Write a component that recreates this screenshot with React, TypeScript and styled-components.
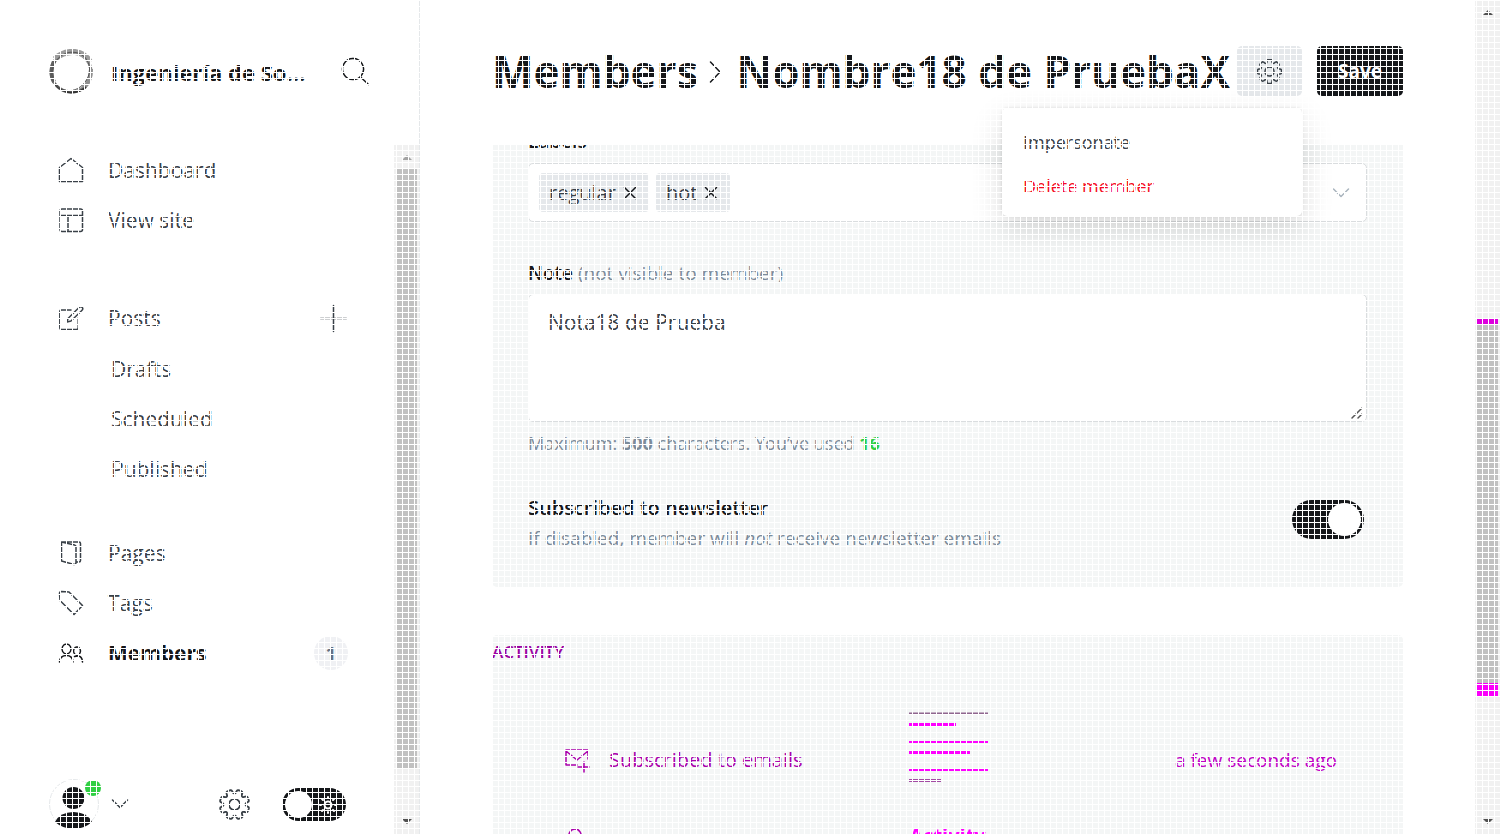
import React from "react";
import styled, { createGlobalStyle } from "styled-components";

const ink = "#15171a";
const slate = "#394047";

const GlobalStyle = createGlobalStyle`
  *, *::before, *::after { box-sizing: border-box; }
  body {
    margin: 0;
    background: #fff;
    color: ${slate};
    font-family: "Open Sans", "Noto Sans", sans-serif;
    font-size: 20px;
    line-height: 30px;
    overflow: hidden;
  }
  button, input, textarea { font: inherit; color: inherit; }
  button { border: 0; padding: 0; background: none; cursor: pointer; }
  svg { display: block; flex: none; }
  h1, h2, h3, p { margin: 0; font-weight: 400; }
`;

/* fine white mesh laid over the whole page */
const Mesh = styled.div`
  position: fixed;
  inset: 0;
  z-index: 10;
  pointer-events: none;
  background-image: linear-gradient(to right, #fff 1px, transparent 1px),
    linear-gradient(to bottom, #fff 1px, transparent 1px);
  background-size: 6px 6px;
`;

const Page = styled.div`
  display: grid;
  grid-template-columns: 420px minmax(0, 1fr) 25px;
  height: 100vh;
`;

const Sidebar = styled.aside`
  display: flex;
  flex-direction: column;
  min-height: 0;
  border-right: 1px solid #e5e8ea;
`;

const SiteHeader = styled.header`
  display: flex;
  align-items: center;
  flex: none;
  height: 145px;
  padding: 0 49px 2px;
`;

const SiteName = styled.div`
  flex: 1;
  margin-left: 17px;
  font-size: 22px;
  font-weight: 700;
  color: ${ink};
  white-space: nowrap;
`;

const SidebarBody = styled.div`
  display: flex;
  flex: 1;
  min-height: 0;
`;

const NavColumn = styled.div`
  display: flex;
  flex: 1;
  flex-direction: column;
  justify-content: space-between;
  padding: 0 46px 0 58px;
`;

const NavGroup = styled.nav<{ $gap?: number }>`
  margin-bottom: ${(p) => p.$gap ?? 0}px;
`;

const SubNav = styled.div`
  padding-top: 1px;
`;

const NavRow = styled.div`
  display: flex;
  align-items: center;
  justify-content: space-between;
  height: 50px;
`;

const NavLink = styled.a<{ $active?: boolean; $sub?: boolean }>`
  display: flex;
  align-items: center;
  gap: 24px;
  padding-left: ${(p) => (p.$sub ? 53 : 0)}px;
  font-size: 21px;
  font-weight: ${(p) => (p.$active ? 700 : 400)};
  color: ${(p) => (p.$active ? ink : slate)};
  text-decoration: none;
`;

const Count = styled.span`
  width: 34px;
  height: 34px;
  border-radius: 50%;
  background: #f0f1f4;
  color: #667080;
  font-size: 18px;
  font-weight: 700;
  line-height: 34px;
  text-align: center;
`;

const UserBar = styled.footer`
  display: flex;
  align-items: center;
  height: 50px;
  margin: 0 2px 5px -9px;
`;

const Account = styled.button`
  display: flex;
  align-items: center;
  gap: 12px;
  margin-right: auto;
`;

const Avatar = styled.span`
  position: relative;
  width: 50px;
  height: 50px;
`;

const Online = styled.span`
  position: absolute;
  top: 1px;
  right: -2px;
  width: 16px;
  height: 16px;
  border-radius: 50%;
  background: #30cf43;
`;

const NightToggle = styled.label`
  position: relative;
  display: block;
  margin-left: 32px;
`;

const Switch = styled.input<{ $w: number; $h: number; $knob: number }>`
  display: flex;
  align-items: center;
  flex: none;
  width: ${(p) => p.$w}px;
  height: ${(p) => p.$h}px;
  margin: 0;
  padding: 0 3px;
  appearance: none;
  border-radius: 20px;
  background: ${ink};
  &::before {
    content: "";
    width: ${(p) => p.$knob}px;
    height: ${(p) => p.$knob}px;
    border-radius: 50%;
    background: #fff;
  }
  &:checked { justify-content: flex-end; }
`;

const SunSpot = styled.span`
  position: absolute;
  top: 8px;
  right: 9px;
  pointer-events: none;
`;

const Track = styled.div`
  display: flex;
  flex-direction: column;
  align-items: center;
  width: 25px;
  flex: none;
  padding: 0 2px;
  background: #f1f1f1;
`;

const TrackArrow = styled.span`
  display: flex;
  align-items: center;
  justify-content: center;
  height: 24px;
  flex: none;
`;

const TrackSpace = styled.div<{ $grow: number }>`
  flex: ${(p) => p.$grow} 1 0;
`;

const Thumb = styled.div<{ $grow: number; $edges?: boolean }>`
  flex: ${(p) => p.$grow} 1 0;
  align-self: stretch;
  background: #c1c1c1;
  box-shadow: ${(p) => (p.$edges ? "inset 0 5px #dd00dd, inset 0 -13px #fb00fb" : "none")};
`;

const Main = styled.main`
  display: flex;
  flex-direction: column;
  min-width: 0;
  min-height: 0;
  padding: 0 72px;
`;

const TopBar = styled.header`
  display: flex;
  align-items: center;
  flex: none;
  height: 145px;
  padding-bottom: 3px;
`;

const Title = styled.h1`
  display: flex;
  align-items: center;
  flex: 1;
  min-width: 0;
  font-size: 44px;
  font-weight: 700;
  line-height: 60px;
  color: ${ink};
  white-space: nowrap;
`;

const TitleLink = styled.a`
  color: inherit;
  text-decoration: none;
`;

const Actions = styled.div`
  position: relative;
  display: flex;
  flex: none;
  gap: 15px;
`;

const GearButton = styled.button`
  display: flex;
  align-items: center;
  justify-content: center;
  width: 65px;
  height: 50px;
  border-radius: 5px;
  background: #e5e8eb;
`;

const SaveButton = styled.button`
  width: 86px;
  height: 50px;
  border-radius: 5px;
  background: ${ink};
  color: #fff;
  font-size: 19px;
  font-weight: 700;
`;

const Menu = styled.div`
  position: absolute;
  top: 62px;
  right: 101px;
  z-index: 2;
  display: flex;
  flex-direction: column;
  width: 300px;
  padding: 12px 21px 8px;
  border-radius: 5px;
  background: #fff;
  box-shadow: 0 0 3px rgba(0, 0, 0, 0.12), 0 12px 32px rgba(0, 0, 0, 0.16);
`;

const MenuItem = styled.button<{ $danger?: boolean }>`
  height: 44px;
  text-align: left;
  font-size: 18px;
  color: ${(p) => (p.$danger ? "#f50b23" : slate)};
`;

const Scroller = styled.div`
  flex: 1;
  min-height: 0;
  overflow: hidden;
`;

const Panel = styled.section`
  border-radius: 5px;
  background: #f4f6f6;
`;

const DetailPanel = styled(Panel)`
  margin: -50px 0 48px;
  padding: 36px;
`;

const FieldLabel = styled.label<{ $h: number }>`
  display: block;
  height: ${(p) => p.$h}px;
  line-height: 20px;
  font-size: 19px;
  font-weight: 600;
  color: ${ink};
`;

const Muted = styled.span`
  font-weight: 400;
  color: #7c8b9a;
`;

const TokenBox = styled.div`
  display: flex;
  align-items: center;
  gap: 7px;
  height: 59px;
  margin-bottom: 41px;
  padding: 0 16px 0 10px;
  border: 1px solid #dadddf;
  border-radius: 5px;
  background: #fff;
`;

const Token = styled.button`
  display: flex;
  align-items: center;
  gap: 7px;
  height: 39px;
  padding: 0 12px 0 10px;
  border-radius: 4px;
  background: #e5e8eb;
  color: ${slate};
`;

const OpenList = styled.button`
  margin-left: auto;
`;

const NoteBox = styled.div`
  position: relative;
  padding-top: 1px;
`;

const NoteInput = styled.textarea`
  display: block;
  width: 100%;
  height: 128px;
  padding: 12px 19px;
  border: 1px solid #dadddf;
  border-radius: 5px;
  background: #fff;
  font-size: 21px;
  line-height: 30px;
  outline: 0;
  resize: vertical;
  &::-webkit-resizer { display: none; }
`;

const Grip = styled.span`
  position: absolute;
  right: 4px;
  bottom: 3px;
  pointer-events: none;
`;

const Help = styled.p<{ $small?: boolean }>`
  font-size: ${(p) => (p.$small ? 18 : 19)}px;
  line-height: 30px;
  color: #7c8b9a;
`;

const NoteHelp = styled.div`
  padding: 6px 0 35px;
`;

const UsedCount = styled.strong`
  color: #30cf43;
`;

const Newsletter = styled.div`
  display: flex;
  justify-content: space-between;
  padding-right: 3px;
  margin-bottom: -2px;
`;

const SwitchCell = styled.div`
  padding-top: 7px;
`;

const NewsletterTitle = styled.label`
  display: block;
  font-size: 20px;
  font-weight: 600;
  color: ${ink};
`;

const ActivityPanel = styled(Panel)`
  padding-top: 6px;
`;

const ActivityTitle = styled.h2`
  height: 71px;
  font-size: 17px;
  font-weight: 600;
  line-height: 22px;
  color: #9a00a2;
`;

const ActivityRow = styled.div`
  display: grid;
  grid-template-columns: minmax(0, 1fr) 80px minmax(0, 1fr);
  height: 95px;
  color: #aa00ac;
`;

const Event = styled.div`
  display: flex;
  align-items: center;
  gap: 19px;
  padding-left: 72px;
  font-size: 20px;
`;

const When = styled.time`
  align-self: center;
  padding-right: 66px;
  text-align: right;
  font-size: 19px;
  color: #c200c6;
`;

const EmptyTitle = styled.h3`
  margin-top: 14px;
  font-size: 20px;
  font-weight: 700;
  text-align: center;
  color: #ff00ff;
`;

const MemberMark = styled.span`
  align-self: start;
  padding-top: 20px;
`;

type IconProps = { d: string; w?: number; h?: number; stroke?: number; color?: string };

const Icon = ({ d, w = 26, h = 26, stroke = 1.5, color = "currentColor" }: IconProps) => (
  <svg
    width={w}
    height={h}
    viewBox={`0 0 ${w} ${h}`}
    fill="none"
    stroke={color}
    strokeWidth={stroke}
    strokeLinecap="round"
    strokeLinejoin="round"
    aria-hidden="true"
  >
    <path d={d} />
  </svg>
);

/* eight rounded teeth with narrow notches between them */
const gearPath = Array.from({ length: 160 }, (_, i) => {
  const t = (i / 160) * Math.PI * 2;
  const r = 12.5 + 1.9 * Math.tanh(2.6 * (Math.cos(8 * t) + 0.35));
  return `${i ? "L" : "M"}${(15 + r * Math.sin(t)).toFixed(2)} ${(15 - r * Math.cos(t)).toFixed(2)}`;
}).join("") + "Z";

const Gear = ({ size, turn = 0 }: { size: number; turn?: number }) => (
  <svg width={size} height={size} viewBox="0 0 30 30" fill="none" stroke={slate} strokeWidth="1.8" aria-hidden="true">
    <path d={gearPath} transform={`rotate(${turn} 15 15)`} />
    <circle cx="15" cy="15" r="5.4" />
  </svg>
);

const icons = {
  home: "M1.5 10.5V24.5H24.5V10.5L13 1.5Z",
  site: "M4 2H22.5Q24.5 2 24.5 4V22.5Q24.5 24.5 22.5 24.5H4Q2 24.5 2 22.5V4Q2 2 4 2ZM2 8.5H24.5M10 8.5V24.5",
  post: "M13 5H3.5Q1.8 5 1.8 6.5V22.5Q1.8 24.5 3.5 24.5H18.5Q20.2 24.5 20.2 22.5V13M10 13.5L21 2.5Q23 1 24.3 2.5Q25.5 4 23.8 5.5L13 16L9 17Z",
  page: "M3.5 2H21Q22.5 2 22.5 3.5V20.5Q22.5 22 21 22H18M3.5 2V21L16 24.5Q18 24.5 18 22.5V7Q18 5.5 16.5 5L3.5 2",
  tag: "M1.5 3.5Q1.5 1.5 3.5 1.5L11 2L24.5 15.5L16 24.5L2 10.5Z",
  members: "M8.5 4A4.5 5 0 1 0 8.51 4M19 7A3.5 4 0 1 0 19.01 7M1.5 22Q2 15.5 8.5 15.5Q14.5 15.5 15 22M16.5 16.5Q24 14 24.5 22",
};

const ScrollTrack = ({ before, size, after, edges }: { before: number; size: number; after: number; edges?: boolean }) => (
  <Track aria-hidden="true">
    <TrackArrow>
      <svg width="12" height="6" viewBox="0 0 12 6"><path d="M1 6L6 1L11 6Z" fill={edges ? "#505050" : "#a3a3a3"} /></svg>
    </TrackArrow>
    <TrackSpace $grow={before} />
    <Thumb $grow={size} $edges={edges} />
    <TrackSpace $grow={after} />
    <TrackArrow>
      <svg width="12" height="6" viewBox="0 0 12 6"><path d="M1 0L6 5L11 0Z" fill="#505050" /></svg>
    </TrackArrow>
  </Track>
);

/* uneven brushed ring: lighter at the top, darker on the left and the foot */
const Ring = () => (
  <svg width="45" height="45" viewBox="0 0 45 45" fill="none" aria-hidden="true">
    <ellipse cx="22" cy="23" rx="20" ry="20" stroke="#8a8a8a" strokeWidth="3" />
    <path d="M6 10Q14 2 26 3Q36 4 41 13" stroke="#9c9c9c" strokeWidth="6" />
    <path d="M42 20Q42 34 34 39" stroke="#8f8f8f" strokeWidth="4" />
    <path d="M5 12Q0 24 5 33" stroke="#606060" strokeWidth="4" />
    <path d="M6 35Q12 43 22 43.500Q32 43 37 38" stroke="#333" strokeWidth="2" />
    <ellipse cx="22" cy="22.5" rx="18" ry="20" transform="rotate(40 22 22)" stroke="#555" strokeWidth="1" />
  </svg>
);

export default function App() {
  return (
    <>
      <GlobalStyle />
      <Page>
        <Sidebar>
          <SiteHeader>
            <Ring />
            <SiteName>Ingeniería de So...</SiteName>
            <button aria-label="Search">
              <Icon w={29} h={29} color={ink} d="M12 1.5A10.5 10.5 0 1 0 12.01 1.5M19.5 20L27.5 27.5" />
            </button>
          </SiteHeader>
          <SidebarBody>
            <NavColumn>
              <div>
                <NavGroup $gap={48}>
                  <NavRow><NavLink href="#dashboard"><Icon d={icons.home} />Dashboard</NavLink></NavRow>
                  <NavRow><NavLink href="#site"><Icon d={icons.site} />View site</NavLink></NavRow>
                </NavGroup>
                <NavGroup $gap={34}>
                  <NavRow>
                    <NavLink href="#posts"><Icon d={icons.post} />Posts</NavLink>
                    <button aria-label="New post"><Icon w={29} h={29} d="M14.5 1.5V27.5M1.5 14.5H27.5" /></button>
                  </NavRow>
                  <SubNav>
                    {["Drafts", "Scheduled", "Published"].map((name) => (
                      <NavRow key={name}><NavLink $sub href={`#${name.toLowerCase()}`}>{name}</NavLink></NavRow>
                    ))}
                  </SubNav>
                </NavGroup>
                <NavGroup>
                  <NavRow><NavLink href="#pages"><Icon d={icons.page} />Pages</NavLink></NavRow>
                  <NavRow><NavLink href="#tags"><Icon d={icons.tag} />Tags</NavLink></NavRow>
                  <NavRow>
                    <NavLink $active href="#members"><Icon d={icons.members} />Members</NavLink>
                    <Count>1</Count>
                  </NavRow>
                </NavGroup>
              </div>
              <UserBar>
                <Account aria-label="Account">
                  <Avatar>
                    <svg width="50" height="50" viewBox="0 0 50 50" aria-hidden="true">
                      <circle cx="25" cy="25" r="24.5" fill="#fff" stroke="#e5e8ea" />
                      <circle cx="24.5" cy="19" r="11" fill={ink} />
                      <path d="M6 43Q11 33 24.5 33Q38 33 43 43Q35 50 25 50Q14 50 6 43Z" fill={ink} />
                    </svg>
                    <Online />
                  </Avatar>
                  <Icon w={18} h={12} d="M1.5 2L9 9.5L16.5 2" />
                </Account>
                <button aria-label="Settings"><Gear size={31} turn={22} /></button>
                <NightToggle aria-label="Night shift">
                  <Switch type="checkbox" $w={64} $h={33} $knob={27} />
                  <SunSpot>
                    <Icon w={18} h={18} color="#fff" stroke={2} d="M9 5.5A3.5 3.5 0 1 0 9.01 5.5M9 1V2M9 16V17M1 9H2M16 9H17M3 3L4 4M14 14L15 15M15 3L14 4M3 15L4 14" />
                  </SunSpot>
                </NightToggle>
              </UserBar>
            </NavColumn>
            <ScrollTrack before={0} size={600} after={42} />
          </SidebarBody>
        </Sidebar>

        <Main>
          <TopBar>
            <Title>
              <TitleLink href="#members">Members</TitleLink>
              <Icon w={38} h={24} color={ink} d="M12.5 3L22 13L12.5 23" />
              Nombre18 de PruebaX
            </Title>
            <Actions>
              <GearButton aria-label="Member actions"><Gear size={25} /></GearButton>
              <SaveButton>Save</SaveButton>
              <Menu>
                <MenuItem>Impersonate</MenuItem>
                <MenuItem $danger>Delete member</MenuItem>
              </Menu>
            </Actions>
          </TopBar>
          <Scroller>
            <DetailPanel>
              <FieldLabel as="div" $h={32}>Labels</FieldLabel>
              <TokenBox>
                {["regular", "hot"].map((name) => (
                  <Token key={name}>
                    {name}
                    <Icon w={14} h={14} color={ink} d="M1.5 1.5L12.5 12.5M12.5 1.5L1.5 12.5" />
                  </Token>
                ))}
                <OpenList aria-label="Show labels"><Icon w={18} h={12} color="#a9b4be" d="M1.5 2L9 9.5L16.5 2" /></OpenList>
              </TokenBox>
              <FieldLabel htmlFor="note" $h={30}>
                Note <Muted>(not visible to member)</Muted>
              </FieldLabel>
              <NoteBox>
                <NoteInput id="note" defaultValue="Nota18 de Prueba" />
                <Grip><Icon w={12} h={12} color="#555" d="M1 11L11 1M7 11L11 7" /></Grip>
              </NoteBox>
              <NoteHelp>
                <Help $small>Maximum: <strong>500</strong> characters. You’ve used <UsedCount>16</UsedCount></Help>
              </NoteHelp>
              <Newsletter>
                <div>
                  <NewsletterTitle htmlFor="newsletter">Subscribed to newsletter</NewsletterTitle>
                  <Help>If disabled, member will <em>not</em> receive newsletter emails</Help>
                </div>
                <SwitchCell>
                  <Switch id="newsletter" type="checkbox" defaultChecked $w={72} $h={39} $knob={33} />
                </SwitchCell>
              </Newsletter>
            </DetailPanel>
            <ActivityPanel>
              <ActivityTitle>ACTIVITY</ActivityTitle>
              <ActivityRow>
                <Event>
                  <Icon w={26} h={26} d="M24 12V3H2V18H13M2 4L13 13L24 4M20 15V25M14 20H25" />
                  Subscribed to emails
                </Event>
                <svg width="80" height="72" viewBox="0 0 80 72" stroke="#ff00ff" aria-hidden="true">
                  <path d="M1 1.5H80" stroke="#8f668f" strokeWidth="2" />
                  <path d="M1 12.5H48M1 40.5H62" strokeWidth="3" />
                  <path d="M1 30H80M1 58H80" strokeWidth="2" />
                  <path d="M1 68.5H33" stroke="#a34aa3" strokeWidth="3" />
                </svg>
                <When>a few seconds ago</When>
              </ActivityRow>
              <ActivityRow>
                <MemberMark><Event as="div"><Icon w={22} h={24} d="M11 2A6 6 0 1 0 11.01 2M2 23Q3 15 11 15Q19 15 20 23" /></Event></MemberMark>
                <EmptyTitle>Activity</EmptyTitle>
              </ActivityRow>
            </ActivityPanel>
          </Scroller>
        </Main>
        <ScrollTrack edges before={295} size={377} after={114} />
      </Page>
      <Mesh />
    </>
  );
}
